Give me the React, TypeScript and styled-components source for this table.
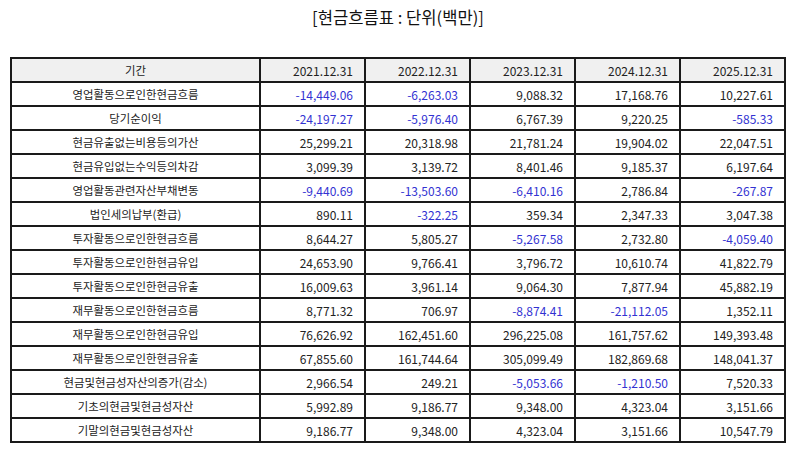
import React from 'react';
import styled, { createGlobalStyle } from 'styled-components';

const GlobalStyle = createGlobalStyle`
  html, body {
    margin: 0;
    padding: 0;
    background: #ffffff;
  }
  body {
    font-family: 'Noto Sans CJK KR', 'Noto Sans', sans-serif;
    color: #222;
  }
`;

type Row = {
	label: string;
	values: number[];
};

const periods = ['2021.12.31', '2022.12.31', '2023.12.31', '2024.12.31', '2025.12.31'];

const rows: Row[] = [
	{ label: '영업활동으로인한현금흐름', values: [-14449.06, -6263.03, 9088.32, 17168.76, 10227.61] },
	{ label: '당기순이익', values: [-24197.27, -5976.4, 6767.39, 9220.25, -585.33] },
	{ label: '현금유출없는비용등의가산', values: [25299.21, 20318.98, 21781.24, 19904.02, 22047.51] },
	{ label: '현금유입없는수익등의차감', values: [3099.39, 3139.72, 8401.46, 9185.37, 6197.64] },
	{ label: '영업활동관련자산부채변동', values: [-9440.69, -13503.6, -6410.16, 2786.84, -267.87] },
	{ label: '법인세의납부(환급)', values: [890.11, -322.25, 359.34, 2347.33, 3047.38] },
	{ label: '투자활동으로인한현금흐름', values: [8644.27, 5805.27, -5267.58, 2732.8, -4059.4] },
	{ label: '투자활동으로인한현금유입', values: [24653.9, 9766.41, 3796.72, 10610.74, 41822.79] },
	{ label: '투자활동으로인한현금유출', values: [16009.63, 3961.14, 9064.3, 7877.94, 45882.19] },
	{ label: '재무활동으로인한현금흐름', values: [8771.32, 706.97, -8874.41, -21112.05, 1352.11] },
	{ label: '재무활동으로인한현금유입', values: [76626.92, 162451.6, 296225.08, 161757.62, 149393.48] },
	{ label: '재무활동으로인한현금유출', values: [67855.6, 161744.64, 305099.49, 182869.68, 148041.37] },
	{ label: '현금및현금성자산의증가(감소)', values: [2966.54, 249.21, -5053.66, -1210.5, 7520.33] },
	{ label: '기초의현금및현금성자산', values: [5992.89, 9186.77, 9348.0, 4323.04, 3151.66] },
	{ label: '기말의현금및현금성자산', values: [9186.77, 9348.0, 4323.04, 3151.66, 10547.79] },
];

const fmt = (n: number) =>
	n.toLocaleString('en-US', { minimumFractionDigits: 2, maximumFractionDigits: 2 });

const Page = styled.div`
  width: 795px;
  height: 452px;
  padding: 5px 9px 0 10px;
  box-sizing: border-box;
`;

const Title = styled.h1`
  margin: 0;
  height: 28px;
  line-height: 24px;
  text-align: center;
  font-size: 16.6px;
  font-weight: 400;
  color: #111;
`;

const Table = styled.table`
  margin-top: 24px;
  width: 776px;
  border-collapse: collapse;
  table-layout: fixed;
  font-size: 11.4px;
`;

const HeadCell = styled.th<{ $label?: boolean }>`
  height: 22px;
  padding: 0;
  border: 2px solid #1a1a1a;
  background: #f0f0f0;
  font-weight: 400;
  color: #222;
  font-size: ${(p) => (p.$label ? '11.4px' : '12px')};
  text-align: ${(p) => (p.$label ? 'center' : 'right')};
  padding-right: ${(p) => (p.$label ? '0' : '11px')};
`;

const LabelCell = styled.td`
  height: 22px;
  padding: 0;
  border: 2px solid #1a1a1a;
  text-align: center;
  color: #222;
`;

const ValueCell = styled.td<{ $negative: boolean }>`
  height: 22px;
  padding: 0 11px 0 0;
  border: 2px solid #1a1a1a;
  text-align: right;
  font-size: 12px;
  color: ${(p) => (p.$negative ? '#3232d2' : '#222')};
`;

export default function App() {
	return (
		<>
			<GlobalStyle />
			<Page>
				<Title>[현금흐름표 : 단위(백만)]</Title>
				<Table>
					<colgroup>
						<col style={{ width: 249 }} />
						{periods.map((p) => (
							<col key={p} />
						))}
					</colgroup>
					<thead>
						<tr>
							<HeadCell $label>기간</HeadCell>
							{periods.map((p) => (
								<HeadCell key={p}>{p}</HeadCell>
							))}
						</tr>
					</thead>
					<tbody>
						{rows.map((row) => (
							<tr key={row.label}>
								<LabelCell>{row.label}</LabelCell>
								{row.values.map((v, i) => (
									<ValueCell key={i} $negative={v < 0}>
										{fmt(v)}
									</ValueCell>
								))}
							</tr>
						))}
					</tbody>
				</Table>
			</Page>
		</>
	);
}
